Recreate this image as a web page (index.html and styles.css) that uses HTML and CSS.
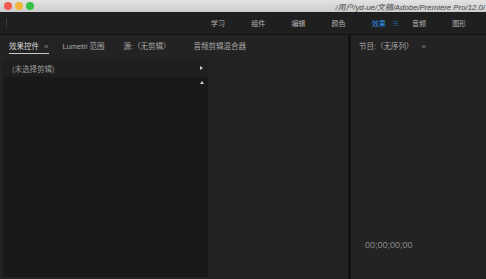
FILE: index.html
```html
<!DOCTYPE html>
<html lang="zh">
<head>
<meta charset="utf-8">
<link rel="stylesheet" href="styles.css">
</head>
<body>
<div class="app">
  <div class="titlebar">
    <div class="lights">
      <span class="light red"></span>
      <span class="light yellow"></span>
      <span class="light green"></span>
    </div>
    <div class="path">/用户/yd-ue/文稿/Adobe/Premiere Pro/12.0/</div>
  </div>
  <div class="header">
    <div class="header-left"><span class="grip"></span></div>
    <nav class="workspaces">
      <span class="ws">学习</span>
      <span class="ws">组件</span>
      <span class="ws">编辑</span>
      <span class="ws">颜色</span>
      <span class="ws active">效果 <span class="menu-icon">≡</span></span>
      <span class="ws">音频</span>
      <span class="ws">图形</span>
    </nav>
  </div>
  <div class="main">
    <section class="panel left">
      <div class="tabs">
        <span class="tab active">效果控件<span class="menu">≡</span></span>
        <span class="tab">Lumetri 范围</span>
        <span class="tab">源:（无剪辑）</span>
        <span class="tab">音频剪辑混合器</span>
      </div>
      <div class="body">
        <div class="effects">
          <div class="clip-row">
            <span>(未选择剪辑)</span>
            <span class="tri-right"></span>
          </div>
          <div class="effects-list">
            <span class="tri-up"></span>
          </div>
        </div>
        <div class="timeline"></div>
      </div>
    </section>
    <div class="divider"></div>
    <section class="panel right">
      <div class="tabs">
        <span class="tab">节目:（无序列）<span class="menu">≡</span></span>
      </div>
      <div class="monitor">
        <span class="timecode">00;00;00;00</span>
      </div>
    </section>
  </div>
</div>
</body>
</html>
```
FILE: styles.css
```css
* { box-sizing: border-box; }
html, body {
  margin: 0;
  padding: 0;
  width: 486px;
  height: 279px;
  overflow: hidden;
  background: #1a1a1a;
  font-family: "Noto Sans CJK SC", "Liberation Sans", sans-serif;
}
.app {
  width: 486px;
  height: 279px;
  display: flex;
  flex-direction: column;
}
.titlebar {
  height: 12px;
  flex: none;
  background: linear-gradient(#e2e2e2, #cdcdcd);
  display: flex;
  align-items: center;
  justify-content: space-between;
  overflow: hidden;
}
.lights {
  display: flex;
  gap: 3px;
  padding-left: 4px;
}
.light {
  width: 8px;
  height: 8px;
  border-radius: 50%;
  display: block;
}
.red { background: #ef5a50; }
.yellow { background: #f2b43a; }
.green { background: #36c246; }
.path {
  font-family: "Liberation Sans", "Noto Sans CJK SC", sans-serif;
  font-size: 7.8px;
  color: #4a4a4a;
  white-space: nowrap;
  padding-right: 1px;
  font-style: italic;
}
.header {
  height: 23px;
  flex: none;
  background: #1f1f1f;
  display: flex;
  align-items: center;
  border-bottom: 1px solid #111;
}
.header-left {
  flex: none;
  width: 211px;
  height: 100%;
  display: flex;
  align-items: center;
  padding-left: 6px;
}
.grip {
  width: 1px;
  height: 10px;
  background: #3a3a3a;
}
.workspaces {
  flex: 1;
  min-width: 0;
  overflow: hidden;
  display: flex;
  align-items: center;
  font-size: 7px;
  color: #b4b4b4;
}
.ws {
  flex: none;
  width: 40.2px;
  white-space: nowrap;
}
.ws.active {
  color: #2f8fe8;
}
.menu-icon {
  margin-left: 5px;
  color: #2f6fb0;
}
.main {
  flex: 1;
  display: flex;
  min-height: 0;
}
.panel {
  display: flex;
  flex-direction: column;
  background: #232323;
}
.panel.left {
  width: 348px;
}
.divider {
  width: 3px;
  background: #121212;
}
.panel.right {
  flex: 1;
}
.tabs {
  height: 20px;
  flex: none;
  display: flex;
  align-items: center;
  font-size: 7.5px;
  color: #a8a8a8;
  padding-left: 9px;
}
.tab {
  position: relative;
  white-space: nowrap;
  font-family: "Liberation Sans", "Noto Sans CJK SC", sans-serif;
}
.tab .menu {
  margin-left: 5px;
  color: #7a7a7a;
}
.tab.active {
  color: #d6d6d6;
}
.tab.active::after {
  content: "";
  position: absolute;
  left: 0;
  width: 40px;
  bottom: -3px;
  height: 1px;
  background: #c8c8c8;
}
.left .tab:nth-child(1) { margin-right: 14px; }
.left .tab:nth-child(2) { margin-right: 19px; }
.left .tab:nth-child(3) { margin-right: 23px; }
.right .tabs { padding-left: 8px; }
.right .tab .menu { margin-left: 8px; }
.body {
  flex: 1;
  display: flex;
  padding: 4px 0 2px 3px;
}
.effects {
  width: 205px;
  display: flex;
  flex-direction: column;
  background: #1b1b1b;
}
.clip-row {
  height: 18px;
  flex: none;
  display: flex;
  align-items: center;
  justify-content: space-between;
  padding: 0 5px 0 9px;
  font-size: 7.5px;
  color: #9a9a9a;
  background: #1f1f1f;
}
.tri-right {
  width: 0;
  height: 0;
  border-top: 2.5px solid transparent;
  border-bottom: 2.5px solid transparent;
  border-left: 3px solid #cfcfcf;
}
.effects-list {
  flex: 1;
  display: flex;
  justify-content: flex-end;
  padding: 4px 4px 0 0;
  background: #191919;
}
.tri-up {
  width: 0;
  height: 0;
  border-left: 2.5px solid transparent;
  border-right: 2.5px solid transparent;
  border-bottom: 3px solid #cfcfcf;
}
.timeline {
  flex: 1;
  background: #222222;
}
.monitor {
  flex: 1;
  display: flex;
  align-items: flex-end;
  padding: 0 0 29px 14px;
}
.timecode {
  font-family: "Liberation Sans", sans-serif;
  font-size: 9px;
  color: #8a8a8a;
}
```
